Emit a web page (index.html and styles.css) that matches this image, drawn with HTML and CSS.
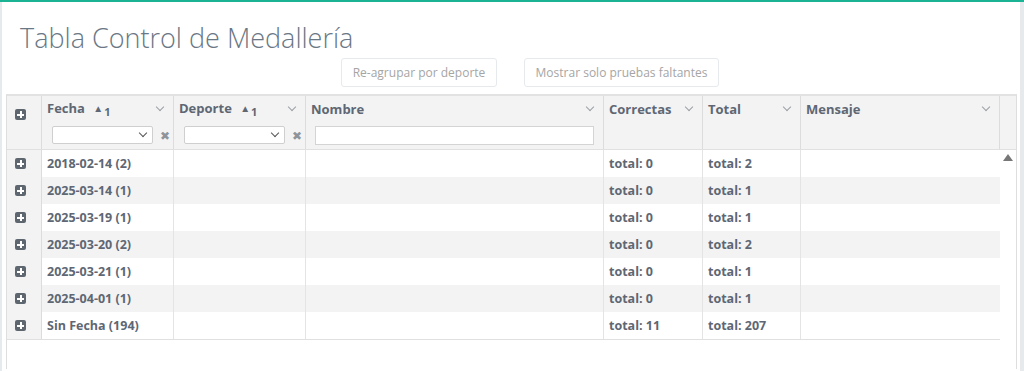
FILE: index.html
```html
<!DOCTYPE html>
<html lang="es">
<head>
<meta charset="utf-8">
<title>Tabla Control de Medallería</title>
<link rel="stylesheet" href="styles.css">
</head>
<body>
<div class="panel">
  <h1 class="title">Tabla Control de Medallería</h1>
  <div class="actions">
    <button class="btn">Re-agrupar por deporte</button>
    <button class="btn">Mostrar solo pruebas faltantes</button>
  </div>
  <div class="grid">
    <div class="head">
      <div class="hc c0"><span class="plus"></span></div>
      <div class="hc c1">
        <div class="htop"><span class="hl">Fecha <span class="sort">&#9650;<sub>1</sub></span></span><span class="chev"></span></div>
        <div class="hfilter"><span class="sel"><span class="selchev"></span></span><span class="clr">&#10006;</span></div>
      </div>
      <div class="hc c2">
        <div class="htop"><span class="hl">Deporte <span class="sort">&#9650;<sub>1</sub></span></span><span class="chev"></span></div>
        <div class="hfilter"><span class="sel"><span class="selchev"></span></span><span class="clr">&#10006;</span></div>
      </div>
      <div class="hc c3">
        <div class="htop"><span class="hl">Nombre</span><span class="chev"></span></div>
        <div class="hfilter"><span class="inp"></span></div>
      </div>
      <div class="hc c4"><div class="htop"><span class="hl">Correctas</span><span class="chev"></span></div></div>
      <div class="hc c5"><div class="htop"><span class="hl">Total</span><span class="chev"></span></div></div>
      <div class="hc c6"><div class="htop"><span class="hl">Mensaje</span><span class="chev"></span></div></div>
      <div class="hc c7"></div>
    </div>
    <div class="bodywrap">
      <div class="rows">
        <div class="row"><div class="cell c0"><span class="plus"></span></div><div class="cell c1">2018-02-14 (2)</div><div class="cell c2"></div><div class="cell c3"></div><div class="cell c4">total: 0</div><div class="cell c5">total: 2</div><div class="cell c6"></div></div>
        <div class="row alt"><div class="cell c0"><span class="plus"></span></div><div class="cell c1">2025-03-14 (1)</div><div class="cell c2"></div><div class="cell c3"></div><div class="cell c4">total: 0</div><div class="cell c5">total: 1</div><div class="cell c6"></div></div>
        <div class="row"><div class="cell c0"><span class="plus"></span></div><div class="cell c1">2025-03-19 (1)</div><div class="cell c2"></div><div class="cell c3"></div><div class="cell c4">total: 0</div><div class="cell c5">total: 1</div><div class="cell c6"></div></div>
        <div class="row alt"><div class="cell c0"><span class="plus"></span></div><div class="cell c1">2025-03-20 (2)</div><div class="cell c2"></div><div class="cell c3"></div><div class="cell c4">total: 0</div><div class="cell c5">total: 2</div><div class="cell c6"></div></div>
        <div class="row"><div class="cell c0"><span class="plus"></span></div><div class="cell c1">2025-03-21 (1)</div><div class="cell c2"></div><div class="cell c3"></div><div class="cell c4">total: 0</div><div class="cell c5">total: 1</div><div class="cell c6"></div></div>
        <div class="row alt"><div class="cell c0"><span class="plus"></span></div><div class="cell c1">2025-04-01 (1)</div><div class="cell c2"></div><div class="cell c3"></div><div class="cell c4">total: 0</div><div class="cell c5">total: 1</div><div class="cell c6"></div></div>
        <div class="row last"><div class="cell c0"><span class="plus"></span></div><div class="cell c1">Sin Fecha (194)</div><div class="cell c2"></div><div class="cell c3"></div><div class="cell c4">total: 11</div><div class="cell c5">total: 207</div><div class="cell c6"></div></div>
      </div>
      <div class="scroll"><span class="arrow"></span></div>
    </div>
  </div>
</div>
</body>
</html>
```
FILE: styles.css
```css
html, body { margin: 0; padding: 0; }
html { border-top: 2px solid #1ab394; background: #e7eaec; }
body { height: 369px; overflow: hidden; font-family: "Open Sans", "Liberation Sans", sans-serif; }
.panel { margin-left: 2px; width: 1018px; height: 369px; background: #fff; box-sizing: border-box; padding-left: 4px; }
.title { margin: 0; padding: 16px 0 0 14px; height: 39px; font-weight: 300; font-size: 27px; line-height: 39px; color: #6a7785; box-sizing: content-box; }
.actions { display: flex; gap: 27px; padding-left: 335px; margin-top: 1px; height: 29px; }
.btn { height: 29px; border: 1px solid #e7eaec; border-radius: 3px; background: #fff; color: #a5a5a5; font-family: "Open Sans", sans-serif; font-size: 12px; padding: 0; white-space: nowrap; box-sizing: border-box; }
.btn:first-child { width: 156px; }
.btn:last-child { width: 195px; }
.grid { margin-top: 7px; width: 1011px; border: 1px solid #dedede; border-top: 2px solid #e2e2e2; border-bottom: 0; height: 275px; box-sizing: border-box; color: #5e6773; }
.head { display: flex; background: #f3f3f3; height: 53px; border-bottom: 1px solid #e0e0e0; }
.hc { box-sizing: border-box; border-right: 1px solid #dcdcdc; height: 100%; }
.c0 { width: 35px; } .c1 { width: 132px; } .c2 { width: 132px; } .c3 { width: 298px; }
.c4 { width: 99px; } .c5 { width: 98px; } .c6 { width: 199px; } .c7 { width: 16px; border-right: 0; }
.hc.c0 { padding: 7px 0 0 8px; }
.htop { display: flex; justify-content: space-between; align-items: center; height: 26px; padding: 0 10px 0 5px; font-weight: 700; font-size: 13px; }
.hl { white-space: nowrap; }
.sort { font-size: 10px; margin-left: 5px; vertical-align: 1px; }
.sort sub { font-size: 11px; vertical-align: -4px; margin-left: 1px; }
.chev { width: 5px; height: 5px; border-right: 1px solid #9aa0a6; border-bottom: 1px solid #9aa0a6; transform: rotate(45deg); margin-top: -4px; }
.hfilter { display: flex; align-items: center; padding: 4px 0 0 10px; height: 18px; }
.sel { width: 101px; height: 18px; border: 1px solid #cfcfcf; border-radius: 2px; background: #fff; box-sizing: border-box; position: relative; }
.selchev { position: absolute; right: 6px; top: 3px; width: 5px; height: 5px; border-right: 1.5px solid #555; border-bottom: 1.5px solid #555; transform: rotate(45deg); }
.clr { margin-left: 7px; font-size: 12px; color: #8e949a; }
.c3 .hfilter { padding-left: 9px; }
.inp { width: 279px; height: 19px; border: 1px solid #d4d4d4; background: #fff; box-sizing: border-box; }
.plus { display: inline-block; width: 11px; height: 11px; border-radius: 2px; background: #5e6670; position: relative; }
.plus::before, .plus::after { content: ""; position: absolute; background: #fff; }
.plus::before { left: 2px; right: 2px; top: 4.5px; height: 2px; }
.plus::after { top: 2px; bottom: 2px; left: 4.5px; width: 2px; }
.bodywrap { display: flex; }
.rows { width: 993px; }
.row { display: flex; height: 27px; background: #fff; }
.row.alt { background: #f3f3f3; }
.row.last { border-bottom: 1px solid #e0e0e0; }
.cell { box-sizing: border-box; border-right: 1px solid #e4e4e4; height: 27px; line-height: 27px; padding-left: 5px; font-weight: 700; font-size: 12.5px; white-space: nowrap; }
.cell.c0 { background: #f3f3f3; border-right-color: #dcdcdc; padding-left: 8px; display: flex; align-items: center; }
.cell.c6 { border-right: 0; }
.scroll { width: 16px; display: flex; justify-content: center; padding-top: 4px; }
.arrow { width: 0; height: 0; border-left: 5px solid transparent; border-right: 5px solid transparent; border-bottom: 7px solid #777; }
```
